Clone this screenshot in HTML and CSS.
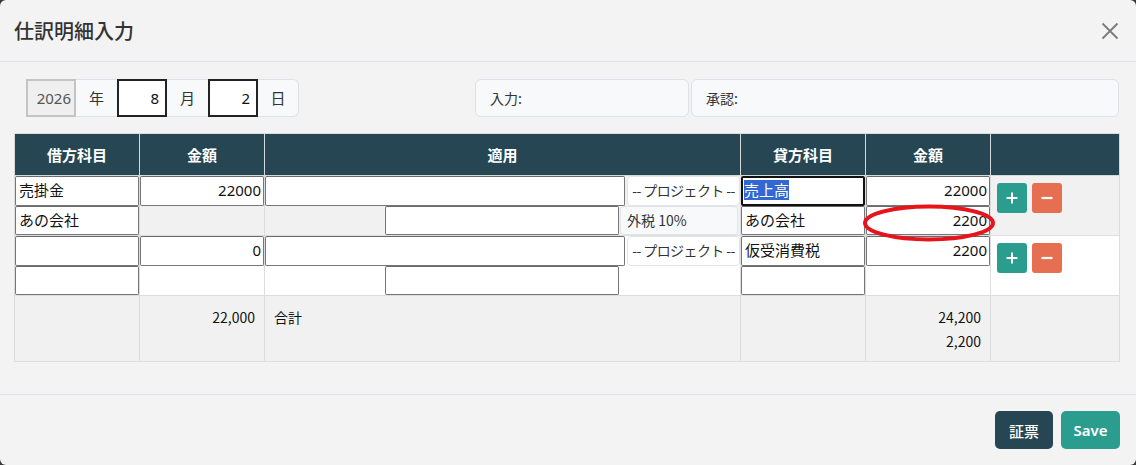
FILE: index.html
```html
<!DOCTYPE html>
<html lang="ja">
<head>
<meta charset="utf-8">
<title>仕訳明細入力</title>
<link rel="stylesheet" href="styles.css">
</head>
<body>
<div class="modal">
  <div class="modal-header">
    <h5 class="modal-title">仕訳明細入力</h5>
    <button class="btn-close" type="button" aria-label="Close">
      <svg width="18" height="18" viewBox="0 0 18 18"><path d="M1.5 1.5 L16.5 16.5 M16.5 1.5 L1.5 16.5" stroke="#7a7a7a" stroke-width="1.8" fill="none"/></svg>
    </button>
  </div>
  <div class="modal-body">
    <div class="top-row">
      <div class="date-group">
        <div class="date-input disabled">2026</div>
        <div class="addon">年</div>
        <div class="date-input active">8</div>
        <div class="addon">月</div>
        <div class="date-input active">2</div>
        <div class="addon last">日</div>
      </div>
      <div class="spacer"></div>
      <div class="info info-input">入力:</div>
      <div class="info info-approve">承認:</div>
    </div>

    <table class="journal">
      <colgroup>
        <col class="c-acc"><col class="c-amt"><col class="c-memo"><col class="c-acc"><col class="c-amt"><col class="c-act">
      </colgroup>
      <thead>
        <tr><th>借方科目</th><th>金額</th><th>適用</th><th>貸方科目</th><th>金額</th><th></th></tr>
      </thead>
      <tbody>
        <tr class="striped">
          <td><div class="stack"><div class="inp">売掛金</div><div class="inp">あの会社</div></div></td>
          <td><div class="stack"><div class="inp num">22000</div><div class="blank"></div></div></td>
          <td>
            <div class="memo-a"><div class="inp grow"></div><div class="proj">-- プロジェクト --</div></div>
            <div class="memo-b"><div class="pad"></div><div class="inp mid"></div><div class="tax">外税 10%</div></div>
          </td>
          <td><div class="stack"><div class="inp focus"><span class="sel">売上高</span></div><div class="inp">あの会社</div></div></td>
          <td><div class="stack rel"><div class="inp num">22000</div><div class="inp num">2200</div>
            <svg class="mark" width="136" height="40" viewBox="0 0 136 40"><ellipse cx="68" cy="20" rx="64" ry="16.5" fill="none" stroke="#e8141c" stroke-width="4"/></svg>
          </div></td>
          <td class="act"><div class="btns">
            <button class="b plus"><svg width="14" height="14" viewBox="0 0 14 14"><path d="M7 1.5 V12.5 M1.5 7 H12.5" stroke="#fff" stroke-width="2"/></svg></button>
            <button class="b minus"><svg width="14" height="14" viewBox="0 0 14 14"><path d="M1.5 7 H12.5" stroke="#fff" stroke-width="2.2"/></svg></button>
          </div></td>
        </tr>
        <tr>
          <td><div class="stack"><div class="inp"></div><div class="inp"></div></div></td>
          <td><div class="stack"><div class="inp num">0</div><div class="blank"></div></div></td>
          <td>
            <div class="memo-a"><div class="inp grow"></div><div class="proj">-- プロジェクト --</div></div>
            <div class="memo-b"><div class="pad"></div><div class="inp mid"></div><div class="notax"></div></div>
          </td>
          <td><div class="stack"><div class="inp">仮受消費税</div><div class="inp"></div></div></td>
          <td><div class="stack"><div class="inp num">2200</div><div class="blank"></div></div></td>
          <td class="act"><div class="btns">
            <button class="b plus"><svg width="14" height="14" viewBox="0 0 14 14"><path d="M7 1.5 V12.5 M1.5 7 H12.5" stroke="#fff" stroke-width="2"/></svg></button>
            <button class="b minus"><svg width="14" height="14" viewBox="0 0 14 14"><path d="M1.5 7 H12.5" stroke="#fff" stroke-width="2.2"/></svg></button>
          </div></td>
        </tr>
        <tr class="striped total">
          <td></td>
          <td class="r">22,000</td>
          <td>合計</td>
          <td></td>
          <td class="r">24,200<br>2,200</td>
          <td></td>
        </tr>
      </tbody>
    </table>
  </div>
  <div class="modal-footer">
    <button class="fbtn dark">証票</button>
    <button class="fbtn teal">Save</button>
  </div>
</div>
</body>
</html>
```
FILE: styles.css
```css
html, body {
  margin: 0;
  padding: 0;
  background: #3a3a3a;
}
body {
  font-family: "Noto Sans", "Noto Sans CJK JP", sans-serif;
  color: #212529;
  width: 1136px;
  height: 465px;
  overflow: hidden;
}
.modal {
  width: 1136px;
  height: 465px;
  background: #f3f3f3;
  border-radius: 6px;
  display: flex;
  flex-direction: column;
  box-sizing: border-box;
}
.modal-header {
  height: 62px;
  box-sizing: border-box;
  border-bottom: 1px solid #dfdfe6;
  display: flex;
  align-items: center;
  padding: 0 14px;
}
.modal-title {
  margin: 0;
  font-family: "Noto Sans CJK JP", sans-serif;
  font-size: 20px;
  font-weight: 500;
  color: #333;
  flex: 1;
  line-height: 24px;
}
.btn-close {
  border: 0;
  background: transparent;
  padding: 0;
  width: 20px;
  height: 20px;
  margin-right: 2px;
  display: flex;
  align-items: center;
  justify-content: center;
}
.modal-body {
  padding: 17px 17px 0 14px;
  height: 332px;
  box-sizing: border-box;
}
.top-row {
  display: flex;
  height: 38px;
  padding-left: 12px;
}
.date-group {
  display: flex;
  height: 38px;
}
.date-input {
  width: 50px;
  box-sizing: border-box;
  height: 38px;
  text-align: right;
  padding-right: 6px;
  font-size: 15px;
  line-height: 34px;
  border: 2px solid #222;
  background: #fff;
  color: #111;
}
.date-input.disabled {
  background: #efefef;
  border-color: #c4c4c4;
  color: #555;
  padding-right: 3px;
}
.addon {
  width: 41px;
  box-sizing: border-box;
  height: 38px;
  background: #f8f9fa;
  border-top: 1px solid #dee2e6;
  border-bottom: 1px solid #dee2e6;
  text-align: center;
  font-family: "Noto Sans CJK JP", sans-serif;
  font-size: 15px;
  line-height: 36px;
  color: #333;
}
.addon.last {
  border-right: 1px solid #dee2e6;
  border-radius: 0 6px 6px 0;
}
.spacer { flex: 1; }
.info {
  height: 38px;
  box-sizing: border-box;
  background: #f8f9fa;
  border: 1px solid #dee2e6;
  border-radius: 6px;
  padding-left: 14px;
  font-family: "Noto Sans CJK JP", sans-serif;
  font-size: 14px;
  line-height: 36px;
  color: #333;
}
.info-input { width: 214px; margin-right: 2px; }
.info-approve { width: 428px; }

.journal {
  margin-top: 16px;
  width: 1105px;
  border-collapse: collapse;
  table-layout: fixed;
  border: 1px solid #dcdde0;
}
.c-acc, .c-amt { width: 125px; }
.c-memo { width: 476px; }
.c-act { width: 129px; }
.journal th {
  background: #264653;
  color: #fff;
  height: 41px;
  font-family: "Noto Sans CJK JP", sans-serif;
  font-size: 15px;
  font-weight: 700;
  border: 1px solid #d6d9dc;
  border-top: 1px solid #dcdde0;
  padding: 0;
}
.journal td {
  border: 1px solid #dcdde0;
  padding: 0;
  vertical-align: top;
  background: #fff;
}
.journal tr.striped td { background: #f1f1f1; }
.stack {
  display: flex;
  flex-direction: column;
}
.rel { position: relative; }
.inp {
  height: 29.5px;
  box-sizing: border-box;
  border: 1px solid #767676;
  border-top-color: #6a6a6a;
  border-radius: 2px;
  background: #fff;
  font-family: "Noto Sans", "Noto Sans CJK JP", sans-serif;
  font-size: 15px;
  line-height: 27.5px;
  padding: 0 3px;
  color: #111;
  white-space: nowrap;
  overflow: hidden;
}
.inp.num { text-align: right; padding-right: 2px; }
.inp.focus {
  border: 2px solid #111;
  line-height: 25.5px;
  padding-left: 1px;
}
.sel {
  background: #3367d1;
  color: #fff;
}
.blank { height: 29.5px; }
.memo-a, .memo-b {
  display: flex;
  height: 29.5px;
}
.inp.grow { flex: 1; }
.proj {
  width: 113px;
  margin-left: 2px;
  box-sizing: border-box;
  height: 29.5px;
  border: 1px solid #e2e4e8;
  border-radius: 4px;
  background: #fff;
  font-family: "Noto Sans CJK JP", sans-serif;
  font-size: 14px;
  letter-spacing: -0.6px;
  line-height: 27.5px;
  text-align: center;
  white-space: nowrap;
  color: #333;
}
.pad { width: 120px; }
.inp.mid { width: 234px; }
.tax {
  width: 118px;
  margin-left: 1px;
  box-sizing: border-box;
  height: 29.5px;
  border: 1px solid #e2e4e8;
  border-radius: 4px;
  background: #f8f9fa;
  font-family: "Noto Sans CJK JP", sans-serif;
  font-size: 14px;
  line-height: 27.5px;
  padding-left: 6px;
  color: #333;
}
.notax { flex: 1; }
.mark {
  position: absolute;
  left: -5px;
  top: 27px;
  pointer-events: none;
}
.btns {
  display: flex;
  gap: 5px;
  padding: 7px 0 0 6px;
}
.b {
  width: 30px;
  height: 30px;
  border: 0;
  border-radius: 3px;
  padding: 0;
  display: flex;
  align-items: center;
  justify-content: center;
}
.b.plus { background: #2a9d8f; }
.b.minus { background: #e76f51; }
.total td {
  height: 66px;
  font-family: "Noto Sans CJK JP", sans-serif;
  font-size: 14px;
  line-height: 24px;
  padding: 9px 9px 0 9px;
  box-sizing: border-box;
  color: #111;
}
.total td.r { text-align: right; }
.modal-footer {
  flex: 1;
  border-top: 1px solid #dfdfe6;
  display: flex;
  justify-content: flex-end;
  align-items: flex-start;
  padding: 16px 16px 0 0;
  gap: 8px;
}
.fbtn {
  height: 38px;
  border: 0;
  border-radius: 5px;
  color: #fff;
  font-family: "Noto Sans", "Noto Sans CJK JP", sans-serif;
  font-size: 15px;
  font-weight: 600;
  padding: 0;
}
.fbtn.dark { background: #264653; width: 58px; font-weight: 500; }
.fbtn.teal { background: #2a9d8f; width: 59px; }
```
